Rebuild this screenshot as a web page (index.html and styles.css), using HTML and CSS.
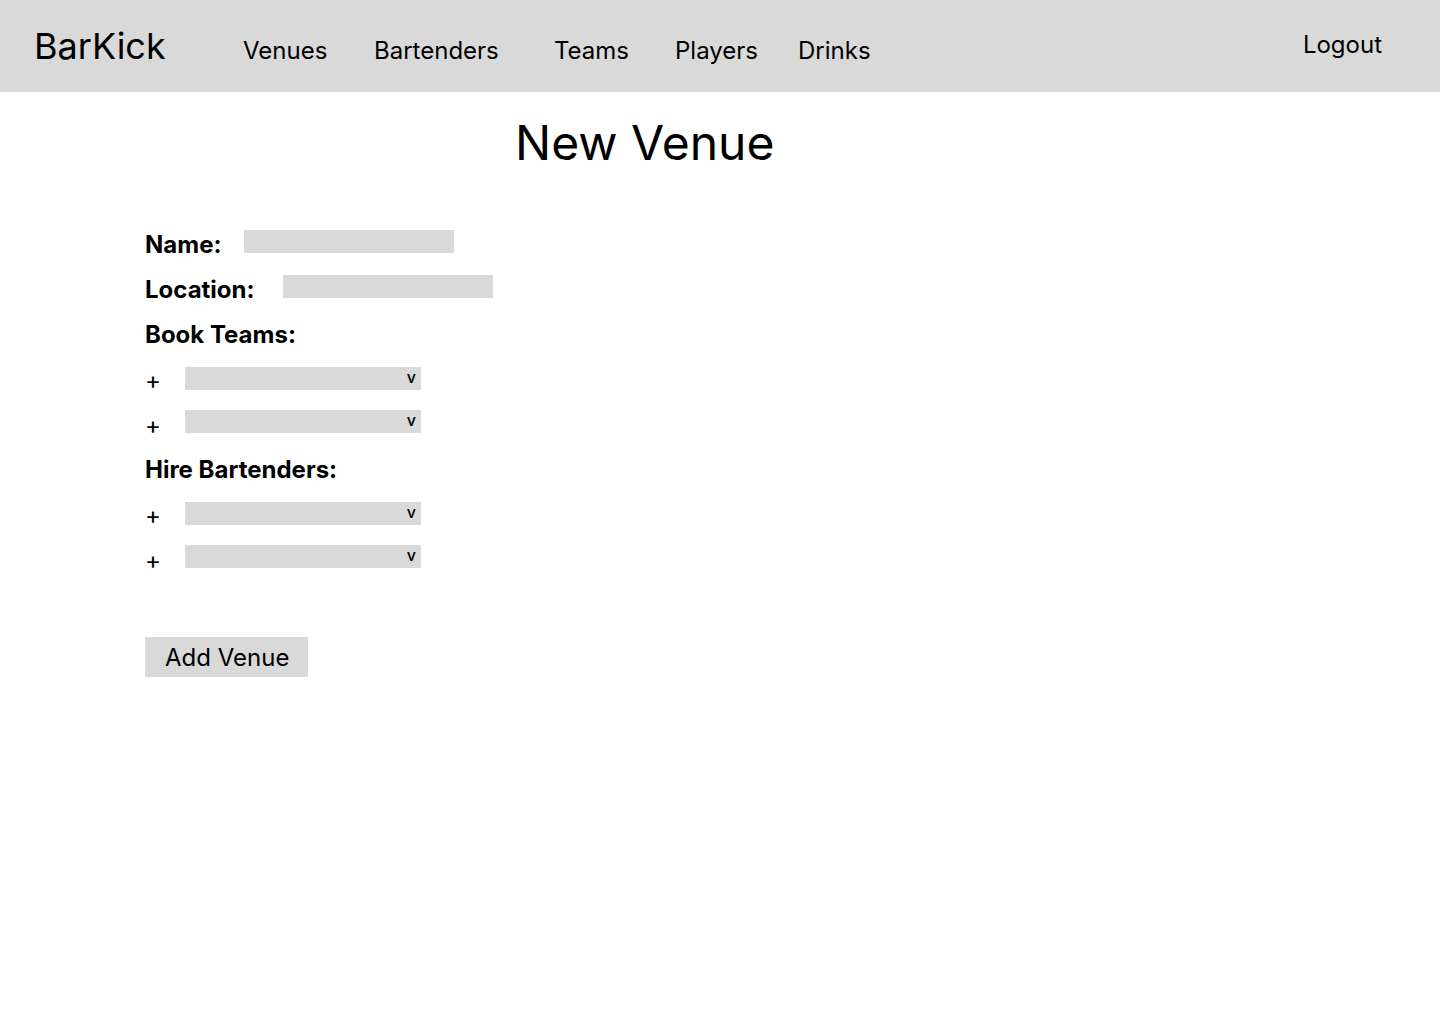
FILE: index.html
```html
<!DOCTYPE html>
<html lang="en">
<head>
    <meta charset="UTF-8">
    <meta name="viewport" content="width=device-width, initial-scale=1.0">
    <title>BarKick - New Venue</title>
    <link rel="stylesheet" href="styles.css">
</head>
<body>

    <header class="topbar">
        <div class="logo">BarKick</div>
        <nav class="nav">
            <a href="#">Venues</a>
            <a href="#">Bartenders</a>
            <a href="#">Teams</a>
            <a href="#">Players</a>
            <a href="#">Drinks</a>
        </nav>
        <a class="logout" href="#">Logout</a>
    </header>

    <main class="page">
        <h1 class="title">New Venue</h1>

        <form class="venue-form">
            <div class="row">
                <label class="label">Name:</label>
                <div class="text-input name-input"></div>
            </div>
            <div class="row">
                <label class="label">Location:</label>
                <div class="text-input location-input"></div>
            </div>

            <div class="row heading-row">
                <span class="label">Book Teams:</span>
            </div>
            <div class="row">
                <span class="plus">+</span>
                <div class="select"><span class="caret">v</span></div>
            </div>
            <div class="row">
                <span class="plus">+</span>
                <div class="select"><span class="caret">v</span></div>
            </div>

            <div class="row heading-row">
                <span class="label">Hire Bartenders:</span>
            </div>
            <div class="row">
                <span class="plus">+</span>
                <div class="select"><span class="caret">v</span></div>
            </div>
            <div class="row">
                <span class="plus">+</span>
                <div class="select"><span class="caret">v</span></div>
            </div>

            <button class="add-button" type="button">Add Venue</button>
        </form>
    </main>

</body>
</html>
```

FILE: styles.css
```css
body {
    font-family: 'Inter', 'Liberation Sans', sans-serif;
    margin: 0;
    background-color: #fff;
    color: #000;
}
a {
    color: #000;
    text-decoration: none;
}
.topbar {
    display: flex;
    align-items: baseline;
    height: 92px;
    box-sizing: border-box;
    padding: 24px 58px 0 34px;
    background-color: #d9d9d9;
}
.logo {
    font-size: 36px;
    width: 209px;
}
.nav {
    display: grid;
    grid-template-columns: 131px 180px 121px 123px auto;
    font-size: 24px;
}
.logout {
    margin-left: auto;
    align-self: flex-start;
    margin-top: 6px;
    font-size: 24px;
}
.page {
    padding-left: 145px;
}
.title {
    font-size: 48px;
    font-weight: 400;
    margin: 22px 0 0 370px;
    line-height: 58px;
}
.venue-form {
    margin-top: 58px;
}
.row {
    display: flex;
    align-items: flex-start;
    height: 45px;
}
.label {
    font-size: 24px;
    font-weight: 700;
    line-height: 29px;
}
.text-input {
    width: 210px;
    height: 23px;
    background-color: #d9d9d9;
}
.name-input {
    margin-left: 23px;
}
.location-input {
    margin-left: 28px;
}
.plus {
    width: 40px;
    font-size: 24px;
    line-height: 29px;
    margin-top: 1px;
}
.select {
    display: flex;
    justify-content: flex-end;
    width: 236px;
    height: 23px;
    background-color: #d9d9d9;
}
.heading-row + .row .select {
    margin-top: 2px;
}
.caret {
    font-size: 16px;
    font-weight: 500;
    line-height: 21px;
    margin-right: 5px;
}
.add-button {
    margin-top: 47px;
    width: 163px;
    height: 40px;
    padding: 0 0 0 20px;
    text-align: left;
    border: none;
    background-color: #d9d9d9;
    font-family: inherit;
    font-size: 24px;
    color: #000;
}
```
